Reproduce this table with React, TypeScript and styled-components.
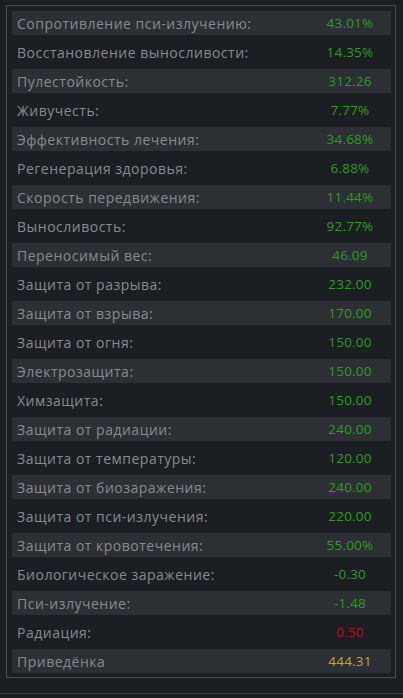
import styled, { createGlobalStyle } from "styled-components";

type Tone = "good" | "bad" | "gold";

type Stat = {
  label: string;
  value: string;
  tone: Tone;
};

const stats: Stat[] = [
  { label: "Сопротивление пси-излучению:", value: "43.01%", tone: "good" },
  { label: "Восстановление выносливости:", value: "14.35%", tone: "good" },
  { label: "Пулестойкость:", value: "312.26", tone: "good" },
  { label: "Живучесть:", value: "7.77%", tone: "good" },
  { label: "Эффективность лечения:", value: "34.68%", tone: "good" },
  { label: "Регенерация здоровья:", value: "6.88%", tone: "good" },
  { label: "Скорость передвижения:", value: "11.44%", tone: "good" },
  { label: "Выносливость:", value: "92.77%", tone: "good" },
  { label: "Переносимый вес:", value: "46.09", tone: "good" },
  { label: "Защита от разрыва:", value: "232.00", tone: "good" },
  { label: "Защита от взрыва:", value: "170.00", tone: "good" },
  { label: "Защита от огня:", value: "150.00", tone: "good" },
  { label: "Электрозащита:", value: "150.00", tone: "good" },
  { label: "Химзащита:", value: "150.00", tone: "good" },
  { label: "Защита от радиации:", value: "240.00", tone: "good" },
  { label: "Защита от температуры:", value: "120.00", tone: "good" },
  { label: "Защита от биозаражения:", value: "240.00", tone: "good" },
  { label: "Защита от пси-излучения:", value: "220.00", tone: "good" },
  { label: "Защита от кровотечения:", value: "55.00%", tone: "good" },
  { label: "Биологическое заражение:", value: "-0.30", tone: "good" },
  { label: "Пси-излучение:", value: "-1.48", tone: "good" },
  { label: "Радиация:", value: "0.50", tone: "bad" },
  { label: "Приведёнка", value: "444.31", tone: "gold" },
];

const toneColor: Record<Tone, string> = {
  good: "#2f9d20",
  bad: "#b3121c",
  gold: "#c9a227",
};

const GlobalStyle = createGlobalStyle`
  html, body {
    margin: 0;
    padding: 0;
    background: #1b1e22;
  }
  body {
    font-family: "Open Sans", "Liberation Sans", sans-serif;
  }
`;

const Page = styled.div`
  height: 694px;
  border-bottom: 1px solid #3c3f43;
  padding: 5px 7px 0 6px;
  box-sizing: border-box;
`;

const Panel = styled.div`
  border: 1px solid #4a4d51;
  padding: 5px 4px 4px 5px;
  display: flex;
  flex-direction: column;
  gap: 5px;
`;

const Row = styled.div<{ $striped: boolean }>`
  display: grid;
  grid-template-columns: 1fr 78px;
  align-items: center;
  height: 24px;
  padding-left: 5px;
  background: ${({ $striped }) => ($striped ? "#2c2f33" : "transparent")};
`;

const Label = styled.span`
  color: #878b90;
  font-size: 14px;
  letter-spacing: 0.5px;
  white-space: nowrap;
`;

const Value = styled.span<{ $tone: Tone }>`
  color: ${({ $tone }) => toneColor[$tone]};
  font-size: 13.5px;
  letter-spacing: 0.2px;
  text-align: center;
  padding-right: 4px;
`;

export default function App() {
  return (
    <>
      <GlobalStyle />
      <Page>
        <Panel>
          {stats.map((s, i) => (
            <Row key={s.label} $striped={i % 2 === 0}>
              <Label>{s.label}</Label>
              <Value $tone={s.tone}>{s.value}</Value>
            </Row>
          ))}
        </Panel>
      </Page>
    </>
  );
}
